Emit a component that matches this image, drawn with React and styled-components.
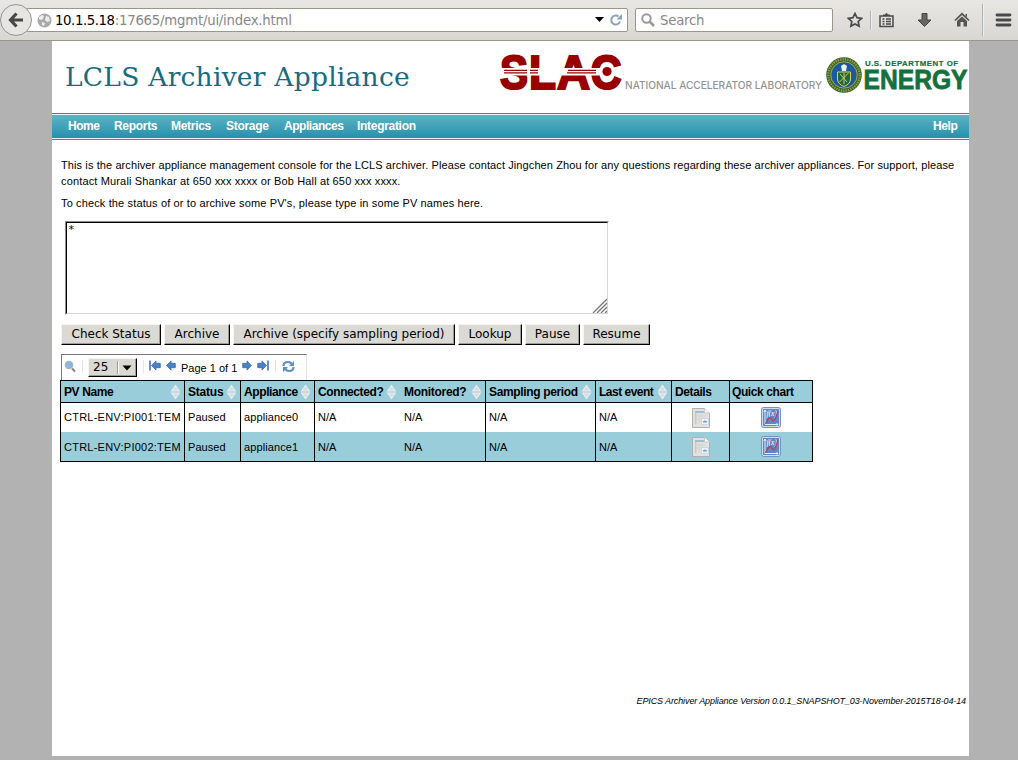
import React from "react";
import styled, { createGlobalStyle } from "styled-components";

const Global = createGlobalStyle`
  * { box-sizing: border-box; }
  body { margin: 0; background: #b2b2b2; font: 11px "Liberation Sans", sans-serif; color: #000; overflow: hidden; }
  p, h1 { margin: 0; }
`;

const Screen = styled.div`
  width: 1018px;
  height: 760px;
  display: flex;
  flex-direction: column;
`;

const Chrome = styled.header`
  height: 41px;
  flex: none;
  display: flex;
  align-items: center;
  background: linear-gradient(#e8e7e4, #d9d7d2);
  border-bottom: 1px solid #9b968c;
  font: 13.3px "DejaVu Sans", sans-serif;
  color: #888;
`;
const BackButton = styled.div`
  width: 32px;
  height: 32px;
  flex: none;
  border: 1px solid #8e959b;
  border-radius: 50%;
  background: #e6e5e2;
  display: flex;
  align-items: center;
  justify-content: center;
  position: relative;
  z-index: 1;
`;
const Field = styled.div`
  height: 24px;
  width: ${(p) => p.$w}px;
  margin-left: ${(p) => p.$ml}px;
  padding: 0 4px 0 ${(p) => p.$pl}px;
  border: 1px solid #9b968c;
  border-radius: 2px;
  background: #fff;
  display: flex;
  align-items: center;
  white-space: nowrap;
  letter-spacing: -0.23px;
  svg { flex: none; }
`;
const Host = styled.span`color: #000; letter-spacing: -0.42px;`;
const Address = styled.span`flex: 1; margin-left: 3px;`;
const SearchText = styled.span`margin-left: 5px;`;
const ChromeIcon = styled.svg`
  flex: none;
  margin-left: ${(p) => p.$ml}px;
`;
const ChromeRule = styled.i`
  width: 1px;
  height: ${(p) => p.$h}px;
  margin-left: ${(p) => p.$ml}px;
  background: #aeb4ba;
  box-shadow: 1px 0 #eeeeec;
`;

const Page = styled.main`
  width: 917px;
  height: 715px;
  margin-left: 52px;
  background: #fff;
  display: flex;
  flex-direction: column;
`;
const Banner = styled.div`
  height: 72px;
  flex: none;
  display: flex;
  justify-content: space-between;
  padding-left: 13px;
`;
const Title = styled.h1`
  font: 26.5px/72px "DejaVu Serif", serif;
  color: #176b81;
  letter-spacing: 0.24px;
  white-space: nowrap;
`;
const Nav = styled.nav`
  height: 27px;
  flex: none;
  display: flex;
  padding: 0 12px 0 16px;
  gap: 15px;
  border: solid #44839a;
  border-width: 1px 0;
  background: linear-gradient(#62b4c7, #2190ab);
  box-shadow: inset 0 1px #eef5f7, inset 0 -1px #eef5f7;
  color: #fff;
  font: bold 12px/25px "Liberation Sans", sans-serif;
  white-space: nowrap;
`;
const NavItem = styled.span`
  width: ${(p) => p.$w}px;
  letter-spacing: ${(p) => p.$ls || -0.3}px;
  &:last-child { margin-left: auto; }
`;
const Body = styled.section`
  padding: 17px 0 0 9px;
  display: flex;
  flex-direction: column;
  align-items: flex-start;
`;
const Para = styled.p`
  line-height: 16px;
  margin-bottom: 6px;
  white-space: nowrap;
`;
const Line = styled.span`
  display: block;
  letter-spacing: ${(p) => p.$ls || 0}px;
`;
const Area = styled.div`
  width: 544px;
  height: 94px;
  margin: 4px 0 9px 4px;
  border: 1px solid;
  border-color: #8a8a86 #fff #fff #8a8a86;
  display: flex;
`;
const AreaInner = styled.div`
  flex: 1;
  border: 1px solid;
  border-color: #000 #d6d6d3 #d6d6d3 #000;
  padding: 0 0 0 1px;
  font: 11px/13px "DejaVu Sans Mono", monospace;
  display: flex;
  justify-content: space-between;
  svg { align-self: flex-end; }
`;
const Buttons = styled.div`
  display: flex;
  gap: 3px;
`;
const Button = styled.div`
  width: ${(p) => p.$w}px;
  height: 21px;
  flex: none;
  text-align: center;
  font: 12px/19px "DejaVu Sans", sans-serif;
  background: #dad9d4;
  border: 1px solid;
  border-color: #f4f4f2 #000 #000 #f4f4f2;
  box-shadow: inset -1px -1px #9d9c97;
  white-space: nowrap;
`;
const Pager = styled.div`
  width: 246px;
  height: 26px;
  margin-top: 9px;
  border: 1px solid #777;
  border-right-color: #e4e4e4;
  border-bottom: 0;
  display: flex;
  align-items: center;
  padding: 0 0 2px 2px;
  svg { flex: none; }
`;
const Gap = styled.i`width: 5px;`;
const PagerRule = styled.i`
  width: 1px;
  height: 13px;
  background: #e4e4e4;
  margin: 0 ${(p) => p.$mr}px 0 ${(p) => p.$ml}px;
`;
const Select = styled.div`
  width: 49px;
  height: 19px;
  margin-top: 2px;
  border: 1px solid;
  border-color: #f4f4f2 #000 #000 #f4f4f2;
  box-shadow: inset -1px -1px #9d9c97;
  background: #dad9d4;
  display: flex;
  align-items: center;
  padding-left: 4px;
  font: 12px/17px "DejaVu Sans", sans-serif;
`;
const SelectRule = styled.i`
  width: 2px;
  height: 13px;
  border-left: 1px solid #9d9c97;
  border-right: 1px solid #fff;
  margin: 0 3px 0 9px;
`;
const PageText = styled.span`
  width: 56px;
  margin: 3px 5px 0;
  white-space: nowrap;
`;
const Table = styled.div`
  width: 753px;
  margin-left: -1px;
  border: 1px solid #000;
  border-left: 0;
`;
const Row = styled.div`
  display: grid;
  grid-template-columns: 124px 56px 74px 86px 85px 110px 76px 58px 83px;
  height: ${(p) => (p.$head ? 22 : 29)}px;
  background: ${(p) => (p.$tint ? "#99cdda" : "#fff")};
  border-bottom: ${(p) => (p.$head ? "1px solid #000" : "0")};
  font-weight: ${(p) => (p.$head ? "bold" : "normal")};
  font-size: ${(p) => (p.$head ? 12 : 11)}px;
`;
const Cell = styled.div`
  border-left: 1px solid ${(p) => (p.$open ? "transparent" : "#000")};
  padding: 0 3px ${(p) => p.$lift || 0}px ${(p) => (p.$tight ? 2 : 3)}px;
  display: flex;
  align-items: center;
  justify-content: ${(p) => (p.$center ? "center" : "space-between")};
  letter-spacing: ${(p) => p.$ls || 0}px;
  white-space: nowrap;
  min-width: 0;
  svg { flex: none; }
`;
const Version = styled.div`
  margin: auto 3px 48px auto;
  font: italic 9px/14px "Liberation Sans", sans-serif;
  letter-spacing: -0.11px;
`;

const SortIcon = () => (
  <svg width="11" height="16" viewBox="0 0 11 16">
    <path d="M5.500 1.500 9.300 7H1.700zM1.700 9h7.600L5.500 14.500z" fill="#dcdcdc" stroke="#e9eced" strokeWidth="1.200" />
  </svg>
);
const ArrowSvg = styled.svg`
  transform: ${(p) => (p.$flip ? "scaleX(-1)" : "none")};
`;
const Arrow = ({ flip, bar }) => (
  <ArrowSvg $flip={flip} width={bar ? 12 : 10} height="13" viewBox={bar ? "0 0 12 13" : "2 0 10 13"}>
    {bar && <path d="M1 .5v10" stroke="#3f73b7" strokeWidth="1.600" />}
    <path d="M2.500 5.500 7 .900v2.400h4.300v4.400H7v2.400z" fill="#4a80c4" stroke="#2f62a6" strokeWidth=".7" />
  </ArrowSvg>
);
const DetailsIcon = () => (
  <svg width="20" height="22" viewBox="0 0 20 22">
    <path d="M1.500 1.500h12L18.500 6v14.500h-17z" fill="#e2e2e0" stroke="#b0b0ad" />
    <path d="M4 4h9v2H4z" fill="#9dbedb" />
    <path d="M4 6h1.500v11H4z" fill="#bccbd8" />
    <path d="M8 7v10M11 7v4M6 9h9M6 12h5" stroke="#d2d4d3" fill="none" />
    <path d="M13.500 1.500V6h5" fill="#fafafa" stroke="#c9c9c7" />
    <path d="M10.500 11.500h7v6h-7z" fill="#eef3f8" stroke="#ccd6df" />
    <path d="M12 14.500q2-2 4 0v1h-4z" fill="#6f9fd6" />
  </svg>
);
const ChartIcon = () => (
  <svg width="20" height="21" viewBox="0 0 20 21">
    <rect x=".5" y=".5" width="19" height="20" rx="2" fill="#cddcf0" stroke="#7591be" />
    <rect x="2" y="2" width="16" height="17" fill="#5f87c5" />
    <path d="M4 3v14.500h13M2.800 5 4 3l1.200 2M15.500 16l1.500 1.500-1.500 1.300" fill="none" stroke="#e6eefa" strokeWidth="1" />
    <text x="5.500" y="8.500" fontSize="7.500" textLength="10.500" lengthAdjust="spacingAndGlyphs" fontStyle="italic" fontFamily="Liberation Serif, serif" fill="#fff">f(x)</text>
    <path d="M4.500 17c2-3 3-6.500 4.500-6.500s2 3.500 3.500 3.500 3-5 4.500-10" fill="none" stroke="#b8405f" strokeWidth="1.300" />
  </svg>
);

const LogoSvg = styled.svg`
  overflow: visible;
`;
const Logos = () => (
  <LogoSvg width="470" height="72" viewBox="499 41 470 72">
    <g fill="#980000" stroke="#980000" strokeWidth="2.200" fontFamily="Liberation Sans, sans-serif" fontWeight="bold" fontSize="48.500">
      <text x="500" y="88.700" textLength="28" lengthAdjust="spacingAndGlyphs">S</text>
      <text x="529" y="88.700" textLength="27" lengthAdjust="spacingAndGlyphs">L</text>
      <text x="557" y="88.700" textLength="33" lengthAdjust="spacingAndGlyphs">A</text>
      <text x="590.500" y="88.700" textLength="31" lengthAdjust="spacingAndGlyphs">C</text>
    </g>
    <path d="M499 71.700h105" stroke="#fff" strokeWidth="7.400" />
    <path d="M504 70.300h23M504 72.900h23M530 70.300h8M530 72.900h8M568 70.300h28M567 72.900h29" stroke="#980000" strokeWidth="1.300" />
    <circle cx="607" cy="71.500" r="7" fill="#fff" />
    <circle cx="607" cy="71.500" r="4.600" fill="#980000" />
    <text x="625" y="89" fontFamily="Inter, sans-serif" fontSize="9.800" fontWeight="500" fill="#939393" textLength="197" lengthAdjust="spacingAndGlyphs">NATIONAL ACCELERATOR LABORATORY</text>
    <circle cx="844" cy="75" r="17.800" fill="#2e6b2f" />
    <circle cx="844" cy="75" r="15.700" fill="none" stroke="#a8983c" strokeWidth="2.400" strokeDasharray="1.300 1.100" />
    <circle cx="844" cy="75" r="13.200" fill="#1b5a9e" stroke="#c9b65b" strokeWidth=".8" />
    <path d="M837.500 72h13v7q0 5-6.500 7.500-6.500-2.500-6.500-7.500z" fill="#1f6a3d" stroke="#e2cf62" strokeWidth="1" />
    <path d="m839.500 82 9-9M840 74l7 8M844 73v11" stroke="#e2cf62" strokeWidth=".9" />
    <path d="m841 66 3-2 3 2-1 5h-4z" fill="#f0efe5" />
    <g fill="#14703d" fontFamily="Liberation Sans, sans-serif" fontWeight="bold">
      <text x="865" y="66.200" fontSize="7.800" stroke="#14703d" strokeWidth=".2" textLength="93">U.S. DEPARTMENT OF</text>
      <text x="863.500" y="89.200" fontSize="27" stroke="#14703d" strokeWidth=".8" textLength="104" lengthAdjust="spacingAndGlyphs">ENERGY</text>
    </g>
  </LogoSvg>
);

const heads = [["PV Name", -0.4], ["Status", -0.2], ["Appliance", -0.4], ["Connected?", -0.4], ["Monitored?", -0.3], ["Sampling period", -0.35], ["Last event", -0.5], ["Details", -0.4], ["Quick chart", -0.4]];
const rows = [["CTRL-ENV:PI001:TEM", "Paused", "appliance0"], ["CTRL-ENV:PI002:TEM", "Paused", "appliance1"]];
const spacing = [0.24, 0.05, 0.1];

export default function App() {
  return (
    <Screen>
      <Global />
      <Chrome>
        <BackButton>
          <svg width="16" height="16" viewBox="0 0 16 16"><path d="M8.500 1.500 2.500 8l6 6.500M3 8h12" fill="none" stroke="#474747" strokeWidth="3.200" /></svg>
        </BackButton>
        <Field $w={602} $ml={-6} $pl={10}>
          <svg width="15" height="15" viewBox="0 0 15 15">
            <circle cx="7.500" cy="7.500" r="7" fill="#a9a9a9" />
            <path d="m2 4 3-2 2 1-1 3-2 1-2-1zM9 3l3 1 1 4-3 1-2-2zM5 9l3 1-1 3-2-1z" fill="#ededed" />
          </svg>
          <Address><Host>10.1.5.18</Host>:17665/mgmt/ui/index.html</Address>
          <svg width="28" height="14" viewBox="0 0 28 14">
            <path d="M0 4h9L4.500 9z" fill="#000" />
            <path d="M25 8.500A4.500 4.500 0 1 1 23.500 3.500" fill="none" stroke="#8ba0b4" strokeWidth="2" />
            <path d="M27 1v5.500h-5.500z" fill="#8ba0b4" />
          </svg>
        </Field>
        <Field $w={198} $ml={7} $pl={5}>
          <svg width="14" height="14" viewBox="0 0 14 14"><circle cx="5.500" cy="5.500" r="4.200" fill="none" stroke="#999" strokeWidth="2" /><path d="m8.500 8.500 4.500 4.500" stroke="#999" strokeWidth="2.500" /></svg>
          <SearchText>Search</SearchText>
        </Field>
        <ChromeIcon $ml={14} width="16" height="16" viewBox="0 0 16 16"><path d="m8 1.500 2 4.200 4.600.6-3.400 3.200.9 4.600L8 11.900l-4.100 2.200.9-4.600L1.400 6.300l4.600-.6z" fill="none" stroke="#4a4a4a" strokeWidth="1.700" /></ChromeIcon>
        <ChromeRule $ml={7} $h={18} />
        <ChromeIcon $ml={8} width="15" height="16" viewBox="0 0 15 16"><path d="M1 4h13v10.500H1zM3.500 7h2M7 7h5M3.500 9.500h2M7 9.500h5M3.500 12h2M7 12h5" fill="none" stroke="#4a4a4a" strokeWidth="1.500" /><path d="M4 4V2.500h2Q7.500-.5 9 2.500h2V4z" fill="#4a4a4a" /></ChromeIcon>
        <ChromeIcon $ml={23} width="15" height="16" viewBox="0 0 15 16"><path d="M5 1.500h5V8h4l-6.500 6.500L1 8h4z" fill="#666" stroke="#444" /></ChromeIcon>
        <ChromeIcon $ml={22} width="16" height="16" viewBox="0 0 16 16"><path d="M1 8.500 8 1.800l7 6.700" fill="none" stroke="#555" strokeWidth="1.700" /><path d="m3 9 5-4.600L13 9v5.500H9.500V10h-3v4.500H3z" fill="#555" /><path d="M11.500 2h1.500v3l-1.500-1z" fill="#555" /></ChromeIcon>
        <ChromeRule $ml={12} $h={32} />
        <ChromeIcon $ml={12} width="17" height="14" viewBox="0 0 17 14"><path d="M2 2h13M2 7h13M2 12h13" stroke="#4a4a4a" strokeWidth="2.800" strokeLinecap="round" /></ChromeIcon>
      </Chrome>
      <Page>
        <Banner>
          <Title>LCLS Archiver Appliance</Title>
          <Logos />
        </Banner>
        <Nav>
          <NavItem $w={31} $ls={-0.5}>Home</NavItem>
          <NavItem $w={42}>Reports</NavItem>
          <NavItem $w={40}>Metrics</NavItem>
          <NavItem $w={43}>Storage</NavItem>
          <NavItem $w={58} $ls={-0.45}>Appliances</NavItem>
          <NavItem $w={59}>Integration</NavItem>
          <NavItem $w={24} $ls={-0.4}>Help</NavItem>
        </Nav>
        <Body>
          <Para>
            <Line $ls={0.1}>This is the archiver appliance management console for the LCLS archiver. Please contact Jingchen Zhou for any questions regarding these archiver appliances. For support, please</Line>
            <Line $ls={0.15}>contact Murali Shankar at 650 xxx xxxx or Bob Hall at 650 xxx xxxx.</Line>
          </Para>
          <Para><Line $ls={0.135}>To check the status of or to archive some PV's, please type in some PV names here.</Line></Para>
          <Area>
            <AreaInner>
              *
              <svg width="15" height="15" viewBox="0 0 15 15"><path d="M1 15 15 1M5 15 15 5M9 15l6-6M13 15l2-2" stroke="#777" strokeWidth="1.300" /></svg>
            </AreaInner>
          </Area>
          <Buttons>
            <Button $w={100}>Check Status</Button>
            <Button $w={66}>Archive</Button>
            <Button $w={222}>Archive (specify sampling period)</Button>
            <Button $w={64}>Lookup</Button>
            <Button $w={55}>Pause</Button>
            <Button $w={67}>Resume</Button>
          </Buttons>
          <Pager>
            <svg width="12" height="13" viewBox="0 0 12 13"><circle cx="5" cy="5" r="3.600" fill="#8db5e2" stroke="#9fb6cf" strokeWidth="1.500" /><path d="m8 8.500 3 3" stroke="#8c7f74" strokeWidth="2" /></svg>
            <PagerRule $ml={6} $mr={5} />
            <Select>25<SelectRule /><svg width="10" height="6" viewBox="0 0 10 6"><path d="M.5.5h9L5 5.500z" /></svg></Select>
            <PagerRule $ml={6} $mr={5} />
            <Arrow bar /><Gap /><Arrow />
            <PageText>Page 1 of 1</PageText>
            <Arrow flip /><Gap /><Arrow flip bar />
            <PagerRule $ml={6} $mr={6} />
            <svg width="13" height="13" viewBox="0 0 13 13"><path d="M1.500 6q0-4 4.500-4 2.500 0 4 2M11.500 7q0 4-4.500 4-2.500 0-4-2" fill="none" stroke="#5c8fcb" strokeWidth="2.200" /><path d="M12 1v5H7zM1 12V7h5z" fill="#5c8fcb" /></svg>
          </Pager>
          <Table>
            <Row $head $tint>
              {heads.map(([h, ls], i) => (
                <Cell key={h} $open={i === 4} $ls={ls} $tight={i === 8}>{h}{i < 7 && <SortIcon />}</Cell>
              ))}
            </Row>
            {rows.map((r, n) => (
              <Row key={r[0]} $tint={n === 1}>
                {r.map((t, i) => <Cell key={i} $ls={spacing[i]} $lift={n ? 0 : 2}>{t}</Cell>)}
                {[3, 4, 5, 6].map((i) => <Cell key={i} $open={i === 4} $lift={n ? 0 : 2}>N/A</Cell>)}
                <Cell $center><DetailsIcon /></Cell>
                <Cell $center><ChartIcon /></Cell>
              </Row>
            ))}
          </Table>
        </Body>
        <Version>EPICS Archiver Appliance Version 0.0.1_SNAPSHOT_03-November-2015T18-04-14</Version>
      </Page>
    </Screen>
  );
}
